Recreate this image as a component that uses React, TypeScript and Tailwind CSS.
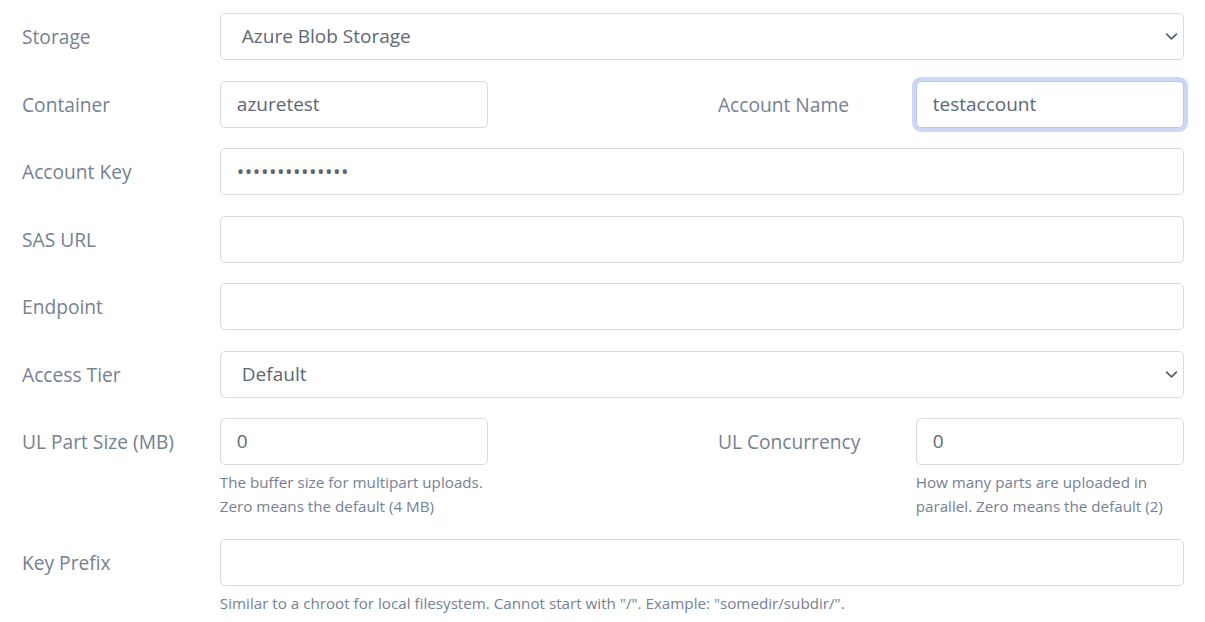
import React from 'react';

const labelCls = 'col-span-2 pl-px text-[19.2px] leading-[29px] py-[9px] text-[#768192]';

const Chevron = () => (
  <svg className="w-[13px] h-[13px] text-[#4f5d73]" viewBox="0 0 16 16" fill="none">
    <path d="M2 5l6 6 6-6" stroke="currentColor" strokeWidth="2" strokeLinecap="round" strokeLinejoin="round" />
  </svg>
);

const SelectBox: React.FC<{ value: string }> = ({ value }) => (
  <div className="h-[47px] rounded-[5px] border border-[#d8dbe0] bg-white pl-[21px] pr-[5px] flex items-center justify-between text-[19px] text-[#5c6873]">
    <span>{value}</span>
    <Chevron />
  </div>
);

const TextBox: React.FC<{ value?: string; focused?: boolean; secret?: boolean }> = ({ value = '', focused, secret }) => (
  <div
    className={`h-[47px] rounded-[5px] border bg-white flex items-center px-[16px] text-[#5c6873] ${
      secret ? 'text-[20px] tracking-[0.5px]' : 'text-[19px]'
    } ${focused ? 'border-[#b9c5f3] shadow-[0_0_0_4px_#cdd6f6]' : 'border-[#d8dbe0]'}`}
  >
    {value}
  </div>
);

const Help: React.FC<{ children: React.ReactNode }> = ({ children }) => (
  <div className="mt-[5px] text-[15.2px] leading-[24px] text-[#768192]">{children}</div>
);

export default function App() {
  return (
    <div className="bg-white w-[1205px] h-[622px] px-[21px] pt-[13px] font-['Open_Sans',sans-serif]">
      <div className="grid grid-cols-12 gap-x-[30px] gap-y-[20.5px] items-start">
        <div className={labelCls}>Storage</div>
        <div className="col-span-10">
          <SelectBox value="Azure Blob Storage" />
        </div>

        <div className={labelCls}>Container</div>
        <div className="col-span-3">
          <TextBox value="azuretest" />
        </div>
        <div className="col-span-2" />
        <div className={labelCls}>Account Name</div>
        <div className="col-span-3">
          <TextBox value="testaccount" focused />
        </div>

        <div className={labelCls}>Account Key</div>
        <div className="col-span-10">
          <TextBox value="••••••••••••••" secret />
        </div>

        <div className={labelCls}>SAS URL</div>
        <div className="col-span-10">
          <TextBox />
        </div>

        <div className={labelCls}>Endpoint</div>
        <div className="col-span-10">
          <TextBox />
        </div>

        <div className={labelCls}>Access Tier</div>
        <div className="col-span-10">
          <SelectBox value="Default" />
        </div>

        <div className={labelCls}>UL Part Size (MB)</div>
        <div className="col-span-3">
          <TextBox value="0" />
          <Help>
            The buffer size for multipart uploads.
            <br />
            Zero means the default (4 MB)
          </Help>
        </div>
        <div className="col-span-2" />
        <div className={labelCls}>UL Concurrency</div>
        <div className="col-span-3">
          <TextBox value="0" />
          <Help>How many parts are uploaded in parallel. Zero means the default (2)</Help>
        </div>

        <div className={labelCls}>Key Prefix</div>
        <div className="col-span-10">
          <TextBox />
          <Help>Similar to a chroot for local filesystem. Cannot start with "/". Example: "somedir/subdir/".</Help>
        </div>
      </div>
    </div>
  );
}
